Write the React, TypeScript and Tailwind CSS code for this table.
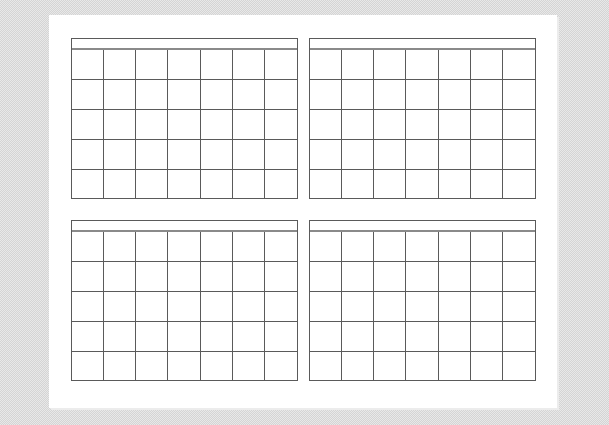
import React from 'react';

// Blank month calendar block
function CalendarBlock() {
  const cells = Array.from({ length: 35 }, (_, i) => i);
  return (
    <div className="w-[227px] border border-[#5a5a5a] bg-white">
      <div className="h-[11px] border-b-2 border-[#8a8a8a]" />
      <div className="grid grid-cols-7">
        {cells.map((i) => (
          <div
            key={i}
            className={
              'border-[#5a5a5a] ' +
              (i % 7 !== 6 ? 'border-r ' : '') +
              (i < 28 ? 'h-[30px] border-b' : 'h-[28px]')
            }
          />
        ))}
      </div>
    </div>
  );
}

export default function App() {
  return (
    <div className="w-[609px] h-[425px] overflow-hidden pt-[15px] pl-[49px] bg-[repeating-conic-gradient(#d4d4d4_0_25%,#e8e8e8_0_50%)] bg-[length:2px_2px]">
      <div className="w-[508px] h-[393px] bg-white shadow-[2px_2px_0_#ececec] pt-[23px] pl-[22px]">
        <div className="grid grid-cols-[227px_227px] gap-x-[11px] gap-y-[21px]">
          <CalendarBlock />
          <CalendarBlock />
          <CalendarBlock />
          <CalendarBlock />
        </div>
      </div>
    </div>
  );
}
